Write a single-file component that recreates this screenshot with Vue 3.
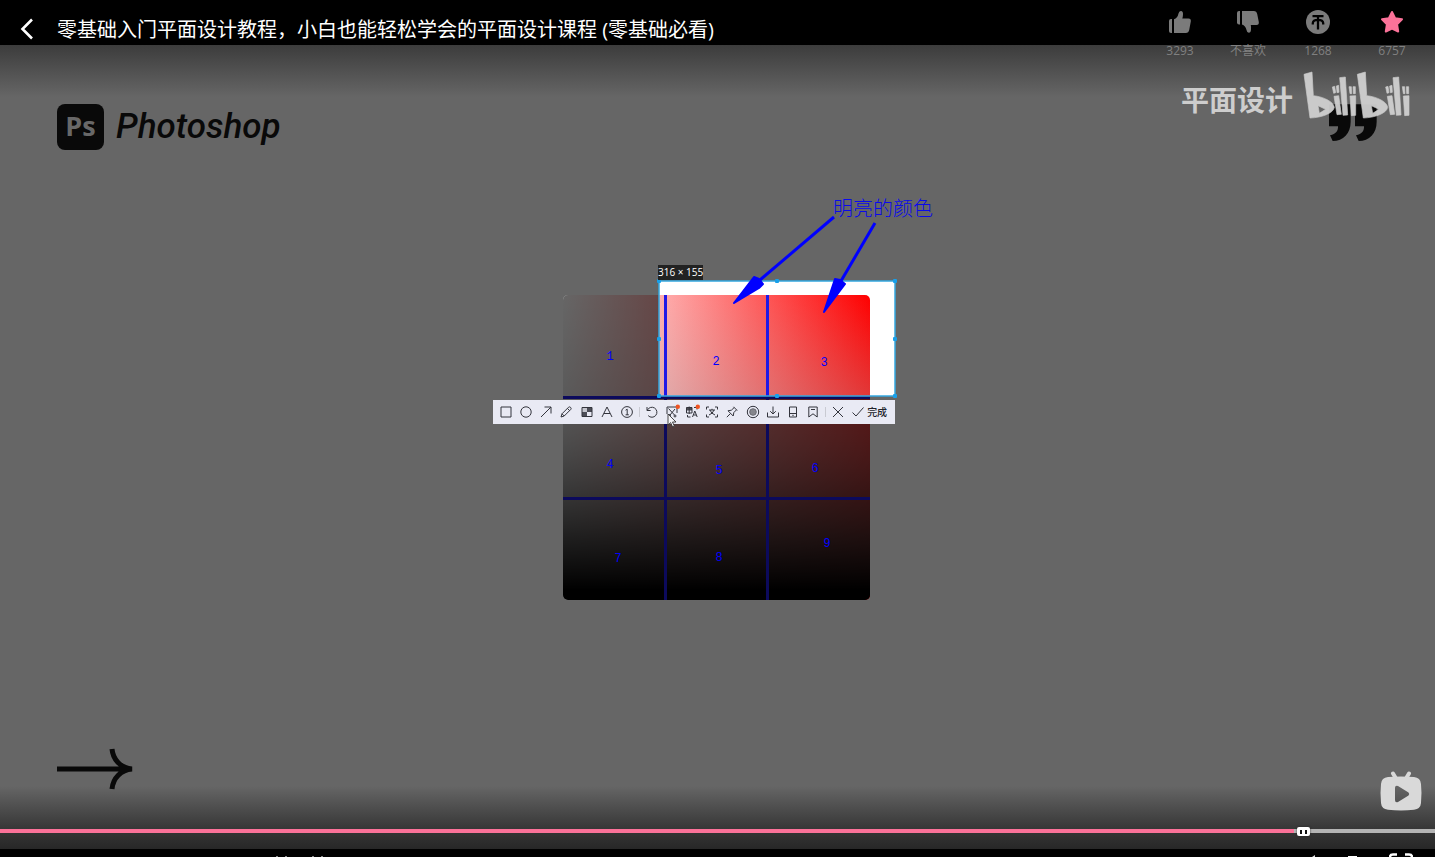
<script setup>
import { ref, computed } from 'vue'

const progress = ref(912)
const played = computed(() => ({ '--played': (progress.value - 10) / 10 + '%' }))

const digits = [
  { t: '1', x: 118, y: 170 },
  { t: '2', x: 224, y: 175 },
  { t: '3', x: 332, y: 176 },
  { t: '4', x: 118, y: 278 },
  { t: '5', x: 227, y: 284 },
  { t: '6', x: 323, y: 282 },
  { t: '7', x: 126, y: 372 },
  { t: '8', x: 227, y: 371 },
  { t: '9', x: 335, y: 357 }
]

const handles = [
  [167, 91], [285, 91], [403, 91],
  [167, 149], [403, 149],
  [167, 206], [285, 206], [403, 206]
]

const tools = [
  { name: '矩形', d: 'M3 3H13V13H3Z' },
  { name: '椭圆', d: 'M8 2.8A5.2 5.2 0 1 1 8 13.2A5.2 5.2 0 1 1 8 2.8Z' },
  { name: '箭头', d: 'M3 13L13 3M6.5 3H13V9.5' },
  { name: '画笔', d: 'M3 13L4 9.8L10.6 3.2Q11.6 2.4 12.6 3.4Q13.6 4.4 12.8 5.4L6.2 12Z M9.4 4.4L11.6 6.6M4 9.8L6.2 12' },
  { name: '马赛克', d: 'M3 3.5H13V12.5H3Z', fill: 'M8 3.5H13V8H8ZM3 8H8V12.5H3Z', soft: 'M3 3.5H8V8H3Z' },
  { name: '文字', d: 'M3 13L8 3L13 13M5 9.5H11' },
  { name: '序号', d: 'M8 2.6A5.4 5.4 0 1 1 8 13.4A5.4 5.4 0 1 1 8 2.6ZM6.6 6.2L8.2 5.2V10.8M6.6 10.8H9.8' },
  { sep: true, name: 's1' },
  { name: '撤销', d: 'M3 3V6.5H6.6M3.3 6.3A5 5 0 1 1 4.2 11.6' },
  { name: '抠图', d: 'M3 10V3H13V9M4.5 4.5L10.5 11M11 5L6 11M4.5 11.5A1 1 0 1 0 6.5 11.5A1 1 0 1 0 4.5 11.5M10 12A1 1 0 1 0 12 12A1 1 0 1 0 10 12', dot: true },
  { name: '翻译', d: 'M2.5 3.5H8V9H2.5ZM5.2 2.5V10M8.5 13L10.8 7L13.2 13M9.5 11H12.2M10 3.5H13V5.5M3.5 11V13H6.5', fill: 'M2.5 3.5H8V6.5H2.5Z', dot: true },
  { name: '文字识别', d: 'M2.5 5.5V3H5M11 3H13.5V5.5M13.5 10.5V13H11M5 13H2.5V10.5M5 6H11M8 4.8V6M10 6Q9 9.5 5 11M6 6Q7 9.5 11 11' },
  { name: '贴图', d: 'M9.5 2.8L13.2 6.5M10.2 3.5L7.4 6.2L4 6.8L9.2 12L9.8 8.6L12.5 5.8M6.5 9.5L2.8 13.2' },
  { name: '录屏', d: 'M8 2.3A5.7 5.7 0 1 1 8 13.7A5.7 5.7 0 1 1 8 2.3Z', circle: true },
  { name: '保存', d: 'M2.5 8.5V13H13.5V8.5M8 2.5V10M5.2 7.2L8 10L10.8 7.2' },
  { name: '发送到手机', d: 'M4.5 3H11.5V13H4.5ZM4.5 9.5H11.5M7.3 11.3H8.7' },
  { name: '收藏', d: 'M3.8 3H12.2V13L8 9.8L3.8 13ZM6 5.5H10' },
  { sep: true, name: 's2' },
  { name: '取消', d: 'M3 3L13 13M13 3L3 13' }
]
</script>

<template>
  <main class="player">
    <header class="topbar">
      <button class="back" aria-label="返回">
        <svg width="14" height="22" viewBox="0 0 14 22"><path d="M12 1.5L2.5 11L12 20.5" fill="none" stroke="#fff" stroke-width="2.6" /></svg>
      </button>
      <h1>零基础入门平面设计教程，小白也能轻松学会的平面设计课程 (零基础必看)</h1>
      <div class="actions">
        <button class="action">
          <svg width="24" height="24" viewBox="0 0 24 24" fill="#7b7b7b">
            <path d="M1 11Q1 9 3 9H4V23H3Q1 23 1 21Z" />
            <path d="M6 9.3Q9.5 8 10.5 3.5Q11 .8 13 1Q15.200 1.300 15 4.500Q14.900 6.800 14.300 8.500H20.500Q23.200 8.700 22.800 11.500L21.200 20Q20.600 23 17.800 23H6Z" />
          </svg>
          <span>3293</span>
        </button>
        <button class="action">
          <svg width="24" height="24" viewBox="0 0 24 24" fill="#7b7b7b">
            <path d="M1 3Q1 1 3 1H4V14.500H3Q1 14.500 1 12.500Z" />
            <path d="M6 1H17.800Q20.600 1 21.200 4L22.800 12Q23.200 14.800 20.500 15H14.800Q15.200 17 15 19.500Q14.800 22.700 12.800 22.800Q11 22.800 10.500 20Q9.500 15.500 6 14.500Z" />
          </svg>
          <span>不喜欢</span>
        </button>
        <button class="action">
          <svg width="24" height="24" viewBox="0 0 24 24">
            <circle cx="12" cy="12" r="12" fill="#7b7b7b" />
            <path d="M6.500 6.200H17.500M12 6.200V19.500M6.800 14.500V13Q7 9.800 12 9.800Q17 9.800 17.200 13V14.500" fill="none" stroke="#000" stroke-width="2.300" />
          </svg>
          <span>1268</span>
        </button>
        <button class="action">
          <svg width="24" height="24" viewBox="0 0 24 24">
            <path d="M12 2L15.100 8.200L22 9.300L17.100 14.300L18.200 21.500L12 18.600L5.800 21.500L6.900 14.300L2 9.300L8.900 8.200Z" fill="#fb7299" stroke="#fb7299" stroke-width="2" stroke-linejoin="round" />
          </svg>
          <span>6757</span>
        </button>
      </div>
    </header>

    <section class="video">
      <div class="stage-wrap">
        <div class="stage">
          <svg class="drawing" width="451" height="514" viewBox="0 0 451 514">
            <defs>
              <linearGradient id="sat" x1="0" y1="0" x2="1" y2="0">
                <stop offset="0" stop-color="#fff" />
                <stop offset="1" stop-color="#f00" />
              </linearGradient>
              <linearGradient id="dark" x1="0" y1="0" x2="0" y2="1">
                <stop offset="0" stop-color="#b4b4b4" stop-opacity="0" />
                <stop offset=".33" stop-color="#a5a5a5" stop-opacity=".33" />
                <stop offset=".45" stop-color="#878787" stop-opacity=".46" />
                <stop offset=".65" stop-color="#4c4c4c" stop-opacity=".66" />
                <stop offset=".8" stop-color="#2c2c2c" stop-opacity=".85" />
                <stop offset=".97" stop-color="#000" stop-opacity="1" />
              </linearGradient>
              <clipPath id="sel"><rect x="167" y="91" width="236" height="115" /></clipPath>
              <g id="picker">
                <rect x="71" y="105" width="307" height="305" rx="5" fill="url(#sat)" />
                <rect x="71" y="105" width="307" height="305" rx="5" fill="url(#dark)" />
                <path d="M173.500 105V410M275.500 105V410M71 207.500H378M71 308.500H378" stroke="#2019e6" stroke-width="3" />
              </g>
            </defs>
            <use href="#picker" />
            <rect x="71" y="105" width="307" height="305" rx="5" fill="#000" fill-opacity=".6" />
            <rect x="167" y="91" width="236" height="115" fill="#fff" />
            <use href="#picker" clip-path="url(#sel)" />
            <rect x="167" y="91" width="236" height="115" fill="none" stroke="#35a8e0" stroke-width="1.500" />
            <rect v-for="h in handles" :key="h.join()" :x="h[0] - 2" :y="h[1] - 2" width="4" height="4" rx="1" fill="#18a0ea" />
            <g fill="#00f" stroke="#00f">
              <path d="M342 27L268 90M383 33L349 91" stroke-width="3" />
              <path d="M242 113L262 87L267 89L271 94L267 98ZM332 122L343 89L348 90L353 94Z" stroke-width="2" stroke-linejoin="round" />
            </g>
            <text x="341" y="26" class="note">明亮的颜色</text>
            <text v-for="d in digits" :key="d.t" :x="d.x" :y="d.y" class="digit">{{ d.t }}</text>
          </svg>
          <span class="size">316 × 155</span>
          <div class="toolbar" role="toolbar">
            <template v-for="t in tools" :key="t.name">
              <i v-if="t.sep" class="sep"></i>
              <button v-else class="tool" :aria-label="t.name">
                <svg width="16" height="16" viewBox="0 0 16 16">
                  <path v-if="t.soft" :d="t.soft" fill="#c4c5cd" />
                  <path v-if="t.fill" :d="t.fill" fill="#4c4d56" />
                  <path :d="t.d" fill="none" stroke="#33343c" />
                  <circle v-if="t.circle" cx="8" cy="8" r="3.300" fill="#85868c" stroke="#6a6b72" />
                  <circle v-if="t.dot" cx="13.800" cy="2.800" r="2.200" fill="#ee5423" />
                </svg>
              </button>
            </template>
            <button class="done">
              <svg width="14" height="16" viewBox="0 0 14 16"><path d="M1.500 8.500L5 12L12.500 3.500" fill="none" stroke="#33343c" /></svg>
              <span>完成</span>
            </button>
          </div>
          <svg class="cursor" width="11" height="15" viewBox="0 0 11 15">
            <path d="M1 1V12L3.600 9.600L5.600 14L7.400 13.200L5.500 9H9Z" fill="#f4f4f8" stroke="#333" stroke-width=".9" />
          </svg>
        </div>
      </div>

      <div class="upper">
        <div class="brand">
          <span class="ps">Ps</span>
          <span class="ps-name">Photoshop</span>
        </div>
        <div class="watermark">
          <span>平面设计</span>
          <svg width="108" height="72" viewBox="39 33 324 216" role="img" aria-label="bilibili">
            <defs>
              <path id="quote" d="M117 133H182V185C182 220 160 243 128 243L120 226C138 222 145 212 144 199H117Z" />
              <g id="bili">
                <path fill-rule="evenodd" d="M42 43L66 36L70 107C100 110 131 125 133 142C130 160 95 173 60 174ZM84 137L107 148L88 160Z" />
                <path d="M127 81L134 79L137 98L131 100ZM139 78L146 76L147 97L141 98ZM132 109L146 107L154 163L141 164ZM149 53L166 51L173 165L159 166ZM177 80L184 80L185 101L180 101ZM189 80L196 80L196 101L190 101ZM180 108L197 107L197 166L184 167Z" />
              </g>
            </defs>
            <g fill="#090909"><use href="#quote" /><use href="#quote" x="78" /></g>
            <g fill="#d0d0d0" stroke="#d0d0d0" stroke-width="2" stroke-linejoin="round" opacity=".95"><use href="#bili" /><use href="#bili" x="160" /></g>
          </svg>
        </div>
      </div>

      <div class="lower">
        <svg class="next" width="76" height="42" viewBox="0 0 76 42">
          <path d="M0 21H75M55 1C56 12 64 20 75 21C64 22 56 30 55 41" fill="none" stroke="#090909" stroke-width="5" />
        </svg>
        <svg width="42" height="40" viewBox="0 0 42 40">
          <path d="M13 2.500L16 7.500M29 2.500L26 7.500" stroke="#d9d9d9" stroke-width="4" stroke-linecap="round" />
          <path fill-rule="evenodd" fill="#d9d9d9" d="M8 6Q21 5 34 6Q40.500 6.500 41 13Q42 22 41 32Q40.500 38 34 38.800Q21 40 8 38.800Q1.500 38 1 32Q0 22 1 13Q1.500 6.500 8 6ZM15 17V29Q15 32 18 31L28.500 24.500Q30 23 28.500 21.500L18 15Q15 14 15 17Z" />
        </svg>
      </div>

      <input v-model.number="progress" class="seek" type="range" min="0" max="1000" aria-label="播放进度" :style="played" />
    </section>

    <footer class="controls">
      <svg class="clip" width="48" height="2" viewBox="0 0 48 2"><path d="M1 1H3V2H1ZM10 1H12V2H10ZM37 1H39V2H37ZM46 1H48V2H46Z" fill="#888" /></svg>
      <div class="right">
        <button aria-label="音量"><svg width="4" height="2" viewBox="0 0 4 2"><path d="M0 2L3 0V2Z" fill="#ddd" /></svg></button>
        <button aria-label="小窗"><svg width="9" height="2" viewBox="0 0 9 2"><path d="M0 1H9V2H0Z" fill="#fff" /></svg></button>
        <button aria-label="全屏"><svg width="24" height="4" viewBox="0 0 24 4"><path d="M1 4Q1 1.500 4 1.500H8M16 1.500H20Q23 1.500 23 4" fill="none" stroke="#fff" stroke-width="2.500" /></svg></button>
      </div>
    </footer>
  </main>
</template>

<style>
body {
  margin: 0;
  background: #000;
}
</style>

<style scoped>
.player {
  height: 100vh;
  display: flex;
  flex-direction: column;
  overflow: hidden;
  background: #000;
  color: #fff;
  font-family: "Open Sans", "Noto Sans CJK SC", sans-serif;
}
button {
  border: 0;
  padding: 0;
  background: none;
  color: inherit;
  font: inherit;
}
svg {
  display: block;
  flex: none;
}
.topbar {
  height: 45px;
  flex: none;
  display: flex;
  align-items: flex-start;
  padding: 0 5px 0 20px;
  position: relative;
  z-index: 2;
}
.back {
  margin: 18px 23px 0 0;
}
h1 {
  flex: 1;
  margin: 15px 0 0;
  font-size: 20px;
  line-height: 30px;
  font-weight: 400;
  white-space: nowrap;
}
.actions {
  display: flex;
  padding-top: 10px;
}
.action {
  width: 68px;
  display: flex;
  flex-direction: column;
  align-items: center;
  gap: 8px;
  color: #808080;
  font-size: 12px;
  line-height: 18px;
}
.action:nth-child(3) {
  width: 72px;
}
.action:nth-child(4) {
  width: 76px;
}
.video {
  flex: 1;
  position: relative;
  display: flex;
  flex-direction: column;
  background:
    linear-gradient(#3c3c3c, #666) top / 100% 52px no-repeat,
    linear-gradient(#666, #383838 66%, #272727) bottom / 100% 63px no-repeat,
    #666;
}
.stage-wrap {
  position: absolute;
  inset: 0;
  display: flex;
  align-items: center;
  justify-content: center;
}
.stage {
  position: relative;
}
.note {
  font-family: "Noto Sans CJK SC", sans-serif;
  font-size: 20px;
  font-weight: 300;
  fill: #0a0aec;
}
.digit {
  font-family: "Liberation Mono", monospace;
  font-size: 12px;
  text-anchor: middle;
  fill: #00f;
}
.size {
  position: absolute;
  left: 166px;
  top: 75px;
  width: 45px;
  height: 15px;
  background: #222;
  font-size: 10px;
  line-height: 14px;
  white-space: nowrap;
}
.toolbar {
  position: absolute;
  left: 1px;
  top: 210px;
  width: 402px;
  height: 24px;
  box-sizing: border-box;
  padding-left: 3px;
  display: flex;
  align-items: center;
  background: #e9eaf4;
}
.tool {
  flex: 1;
  display: flex;
  justify-content: center;
}
.sep {
  width: 1px;
  height: 10px;
  margin: 0 2px;
  background: #c9cad2;
}
.done {
  display: flex;
  align-items: center;
  gap: 2px;
  width: 47px;
  padding-left: 3px;
  box-sizing: border-box;
  color: #22232a;
  font-size: 10px;
  font-weight: 500;
  line-height: 16px;
}
.cursor {
  position: absolute;
  left: 175px;
  top: 223px;
}
.upper {
  position: relative;
  display: flex;
  justify-content: space-between;
  padding: 26px 24px 0 57px;
}
.brand {
  display: flex;
  align-items: center;
  gap: 12px;
  height: 46px;
  margin-top: 33px;
  color: #090909;
}
.ps {
  width: 47px;
  height: 46px;
  border-radius: 8px;
  background: #090909;
  color: #686868;
  font-size: 27px;
  font-weight: 700;
  line-height: 44px;
  text-align: center;
}
.ps-name {
  font-family: Roboto, sans-serif;
  font-size: 35px;
  font-style: italic;
  font-weight: 500;
  line-height: 44px;
}
.watermark {
  display: flex;
  align-items: flex-start;
  gap: 10px;
  color: #cdcdcd;
  font-size: 28px;
  font-weight: 700;
  line-height: 58px;
}
.lower {
  position: relative;
  display: flex;
  justify-content: space-between;
  align-items: flex-end;
  margin-top: auto;
  padding: 0 13px 18px 57px;
}
.next {
  margin-bottom: 21px;
}
.seek {
  appearance: none;
  position: relative;
  width: 100%;
  height: 4px;
  margin: 0 0 16px;
  background: linear-gradient(to right, #fb7299 var(--played), #b4b4b4 var(--played));
}
.seek::-webkit-slider-thumb {
  appearance: none;
  width: 13px;
  height: 9px;
  border-radius: 2px;
  background:
    linear-gradient(#111, #111) 3px 3px / 2px 4px no-repeat,
    linear-gradient(#111, #111) 8px 3px / 2px 4px no-repeat,
    #fff;
  box-shadow: 0 0 2px #222;
}
.controls {
  height: 8px;
  flex: none;
  display: flex;
  align-items: flex-end;
  justify-content: space-between;
  padding: 0 22px 0 275px;
  box-sizing: border-box;
  overflow: hidden;
}
.right {
  display: flex;
  align-items: flex-end;
  gap: 32px;
}
</style>
